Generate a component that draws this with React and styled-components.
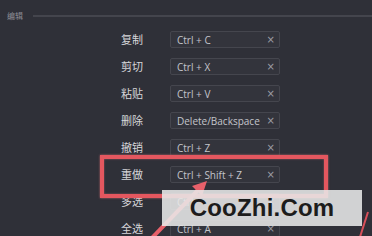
import React from "react";
import styled, { createGlobalStyle } from "styled-components";

const GlobalStyle = createGlobalStyle`
  html, body {
    margin: 0;
    padding: 0;
    background: #2f3038;
  }
  body {
    width: 372px;
    height: 236px;
    overflow: hidden;
    font-family: "Noto Sans CJK SC", "Noto Sans", sans-serif;
  }
`;

const Page = styled.div`
  position: relative;
  width: 372px;
  height: 236px;
  background: #2f3038;
  overflow: hidden;
`;

const SectionHeader = styled.div`
  display: flex;
  align-items: center;
  height: 31px;
  padding-left: 7px;
  gap: 10px;
`;

const SectionTitle = styled.span`
  font-size: 8px;
  color: #8d8e96;
  line-height: 1;
`;

const SectionLine = styled.div`
  flex: 1;
  height: 2px;
  background: #44454d;
`;

const ShortcutList = styled.div`
  display: flex;
  flex-direction: column;
  gap: 10px;
`;

const Row = styled.div`
  display: grid;
  grid-template-columns: 143px 110px;
  column-gap: 27px;
  align-items: center;
  height: 17px;
`;

const Label = styled.span`
  text-align: right;
  font-size: 11px;
  color: #d6d6da;
  line-height: 1;
`;

const KeyBox = styled.div`
  display: flex;
  align-items: center;
  justify-content: space-between;
  box-sizing: border-box;
  height: 17px;
  padding: 0 4px 0 6px;
  background: #33343c;
  border: 1px solid #45464e;
  border-radius: 2px;
`;

const KeyText = styled.span`
  font-family: "Open Sans", "Noto Sans", sans-serif;
  font-size: 10px;
  color: #c4c5cb;
  line-height: 1;
`;

const ClearMark = styled.span`
  font-family: "DejaVu Sans", sans-serif;
  font-size: 10px;
  color: #9c9da4;
  line-height: 1;
`;

const Highlight = styled.div`
  position: absolute;
  left: 100px;
  top: 155px;
  width: 228px;
  height: 43px;
  box-sizing: border-box;
  border: 4px solid #e4575f;
  box-shadow: 0 0 2px rgba(240, 120, 125, 0.7), inset 0 0 2px rgba(240, 120, 125, 0.6);
`;

const Annotation = styled.svg`
  position: absolute;
  left: 0;
  top: 0;
  pointer-events: none;
`;

const Watermark = styled.div`
  position: absolute;
  left: 162px;
  top: 190px;
  width: 200px;
  height: 36px;
  display: flex;
  align-items: center;
  justify-content: center;
  background: rgba(232, 232, 232, 0.88);
  font-family: "Liberation Sans", Arial, sans-serif;
  font-weight: bold;
  font-size: 24px;
  color: #1c1c1c;
  letter-spacing: 0.2px;
`;

const shortcuts = [
  { label: "复制", keys: "Ctrl + C" },
  { label: "剪切", keys: "Ctrl + X" },
  { label: "粘贴", keys: "Ctrl + V" },
  { label: "删除", keys: "Delete/Backspace" },
  { label: "撤销", keys: "Ctrl + Z" },
  { label: "重做", keys: "Ctrl + Shift + Z" },
  { label: "多选", keys: "Ctrl" },
  { label: "全选", keys: "Ctrl + A" },
];

export default function App() {
  return (
    <Page>
      <GlobalStyle />
      <SectionHeader>
        <SectionTitle>编辑</SectionTitle>
        <SectionLine />
      </SectionHeader>
      <ShortcutList>
        {shortcuts.map((s) => (
          <Row key={s.label}>
            <Label>{s.label}</Label>
            <KeyBox>
              <KeyText>{s.keys}</KeyText>
              <ClearMark>×</ClearMark>
            </KeyBox>
          </Row>
        ))}
      </ShortcutList>
      <Highlight />
      <Annotation width="372" height="236" viewBox="0 0 372 236">
        <line x1="150" y1="240" x2="200" y2="188" stroke="#e8606a" strokeWidth="4" />
        <polygon points="207,181 192,186 202,196" fill="#e8606a" />
        <line x1="360" y1="237" x2="368" y2="212" stroke="#d9505a" strokeWidth="2" />
      </Annotation>
      <Watermark>CooZhi.Com</Watermark>
    </Page>
  );
}
